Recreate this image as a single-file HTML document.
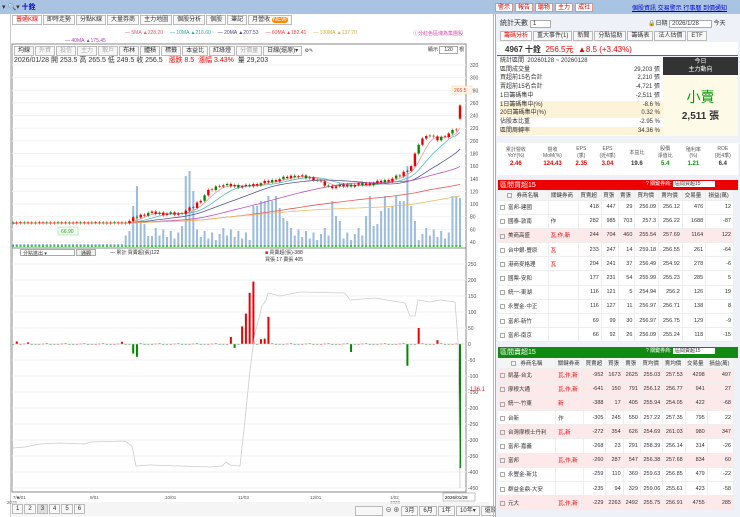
<!DOCTYPE html><html><head><meta charset="utf-8"><style>
*{box-sizing:border-box;margin:0;padding:0}
body{width:740px;height:517px;overflow:hidden;background:#fff;font-family:"Liberation Sans","Noto Sans CJK TC",sans-serif;font-size:7px;color:#333;position:relative}
.a{position:absolute}
.top{left:0;top:0;width:740px;height:14px;background:#a9c4e2}
.btn{display:inline-block;border:1px solid #c99;background:#fff;color:#c00;font-size:6px;padding:0 2px;margin-right:2px;height:9px;line-height:8px}
.tab{display:inline-block;border:1px solid #bbb;background:#f7f7f7;font-size:6px;padding:0 3px;height:10px;line-height:9px;margin-right:1px}
table{border-collapse:collapse}
.t td{font-size:5.5px;height:14.2px;border-right:1px solid #eee;border-bottom:1px solid #eee;text-align:right;padding-right:2px;white-space:nowrap}
.t td.n{text-align:left;padding-left:2px}
.t tr.h td{height:10px;background:#f4f4f4;text-align:center}
.pk{background:#fde9ea}
.cb{display:inline-block;width:5px;height:5px;border:1px solid #aaa;margin-right:3px;vertical-align:middle}
.r{color:#e00}.g{color:#090}
</style></head><body>
<div class="a top"></div>
<div class="a" style="left:2px;top:2px;font-size:7px">▾ 🔍▾ <b style="color:#00c">十銓</b></div>
<div class="a" style="left:495px;top:3px"><span class="btn">警示</span><span class="btn">報告</span><span class="btn">聽物</span><span class="btn">主力</span><span class="btn">成社</span></div>
<div class="a" style="left:632px;top:3px;font-size:6px;color:#00c;text-decoration:underline">個股資訊 交易警示 行事曆 到價通知</div>
<div class="a" style="left:10px;top:14px;width:1px;height:503px;background:#ccc"></div>
<div class="a" style="left:12px;top:15px"><span class="tab" style="color:#e00;background:#fff">普通K線</span><span class="tab">即時走勢</span><span class="tab">分點K線</span><span class="tab">大量券商</span><span class="tab">主力地圖</span><span class="tab">個股分析</span><span class="tab">個股</span><span class="tab">筆記</span><span class="tab">月營收 <span style="background:#f80;color:#fff;border-radius:3px;padding:0 1px">NEW</span></span></div>
<div class="a" style="left:125px;top:30px;font-size:5px;white-space:nowrap"><span style="color:#e55">— 5MA ▲228.20</span> &nbsp;&nbsp;&nbsp;&nbsp;<span style="color:#2a9">— 10MA ▲216.60</span> &nbsp;&nbsp;&nbsp;&nbsp;<span style="color:#448">— 20MA ▲207.53</span> &nbsp;&nbsp;&nbsp;&nbsp;<span style="color:#e44">— 60MA ▲182.41</span> &nbsp;&nbsp;&nbsp;&nbsp;<span style="color:#da3">— 100MA ▲137.70</span></div>
<div class="a" style="left:65px;top:38px;font-size:5px;color:#a4a">— 40MA ▲175.45</div>
<div class="a" style="left:413px;top:30px;font-size:5px;color:#d4a">ⓘ分紅色區塊為集團股</div>
<svg class="a" id="ch" style="left:0;top:0" width="495" height="517"></svg>
<div class="a" style="left:14px;top:46px;font-size:5px"><span class="tab">均線</span><span class="tab" style="color:#aaa">外資</span><span class="tab" style="color:#aaa">投信</span><span class="tab" style="color:#aaa">主力</span><span class="tab" style="color:#aaa">散戶</span><span class="tab">布林</span><span class="tab">體積</span><span class="tab">標籤</span><span class="tab">本益比</span><span class="tab">紅綠燈</span><span class="tab" style="color:#aaa">分價量</span><span class="tab">日線(還原)▾</span> ⚙✎</div>
<div class="a" style="left:14px;top:55px;font-size:7px">2026/01/28 開 253.5 高 265.5 低 249.5 收 256.5 &nbsp; <span class="r">漲跌 8.5 &nbsp;漲幅 3.43%</span> &nbsp;量 29,203</div>
<div class="a" style="left:428px;top:46px;font-size:5px">顯示 <span style="border:1px solid #aaa;padding:0 4px">120</span> 根</div>
<div class="a" style="left:20px;top:249px;font-size:5px;border:1px solid #aaa;width:55px;height:7px;padding-left:2px">分點進出 ▾</div>
<div class="a" style="left:76px;top:249px;font-size:5px;border:1px solid #aaa;background:#eee;width:20px;height:7px;text-align:center">通觀</div>
<div class="a" style="left:110px;top:249px;font-size:5px">— 累計 買賣超(張)122</div>
<div class="a" style="left:265px;top:249px;font-size:5px"><span class="r">■</span> 買賣超(張)-388<br>買張 17 賣張 405</div>
<div class="a" style="left:12px;top:504px;font-size:6px"><span class="tab">1</span><span class="tab">2</span><span class="tab" style="background:#ddd">3</span><span class="tab">4</span><span class="tab">5</span><span class="tab">6</span></div>
<div class="a" style="left:355px;top:505px;font-size:6px;white-space:nowrap"><span class="tab" style="width:28px">&nbsp;</span> ⊖ ⊕ <span class="tab">3月</span><span class="tab">6月</span><span class="tab">1年</span><span class="tab">10年▾</span><span class="tab">還原</span></div>
<div class="a" style="left:493px;top:14px;width:1px;height:503px;background:#bbb"></div>
<div class="a" style="left:495px;top:14px;width:245px;height:503px;background:#eef2f8;border-left:1px solid #aac"></div>
<div class="a" style="left:500px;top:18px;font-size:7px">統計天數 <span style="background:#fff;border:1px solid #aaa;padding:0 14px 0 2px;font-size:6px">1</span></div>
<div class="a" style="left:648px;top:18px;font-size:6px">🔒日期 <span style="background:#fff;border:1px solid #aaa;padding:0 12px 0 2px">2026/1/28</span> 今天</div>
<div class="a" style="left:500px;top:31px;font-size:5px"><span class="tab" style="color:#e00;background:#fff">籌碼分析</span><span class="tab">重大事件(1)</span><span class="tab">新聞</span><span class="tab">分點協助</span><span class="tab">籌碼表</span><span class="tab">法人估價</span><span class="tab">ETF</span></div>
<div class="a" style="left:497px;top:42px;width:241px;height:14px;background:#fff;border-bottom:1px solid #d33;font-size:8px;padding:2px 0 0 8px"><b>4967 十銓</b> &nbsp;<span class="r">256.5元 &nbsp;▲8.5 (+3.43%)</span></div>
<div class="a" style="left:497px;top:57px;width:166px;height:79px;background:#fff;font-size:6px;line-height:8.7px;padding-left:3px">
<div>統計區間 &nbsp;20260128 ~ 20260128</div>
<div>區間成交量<span style="float:right;padding-right:3px">29,203 張</span></div>
<div>買超前15名合計<span style="float:right;padding-right:3px">2,210 張</span></div>
<div>賣超前15名合計<span style="float:right;padding-right:3px">-4,721 張</span></div>
<div>1日籌碼集中 <span style="float:right;padding-right:3px">-2,511 張</span></div>
<div style="background:#fdf3d8">1日籌碼集中(%)<span style="float:right;padding-right:3px">-8.6 %</span></div>
<div style="background:#fdf3d8">20日籌碼集中(%)<span style="float:right;padding-right:3px">0.32 %</span></div>
<div>佔股本比重<span style="float:right;padding-right:3px">-2.95 %</span></div>
<div style="background:#fdf3d8">區間周轉率<span style="float:right;padding-right:3px">34.36 %</span></div></div>
<div class="a" style="left:663px;top:57px;width:75px;height:18px;background:#333;color:#fff;font-size:6px;text-align:center;line-height:8px;padding-top:1px">今日<br>主力動向</div>
<div class="a" style="left:663px;top:75px;width:75px;height:61px;background:#fdfbe8;text-align:center"><div style="color:#090;font-size:14px;margin-top:12px">小賣</div><div style="font-size:10px;font-weight:bold">2,511 張</div></div>
<div class="a" style="left:497px;top:143px;width:241px;height:32px;background:#fff">
<table style="width:100%;font-size:5px;text-align:center"><tr style="height:18px;color:#555"><td>累計營收<br>YoY(%)</td><td>營收<br>MoM(%)</td><td>EPS<br>(季)</td><td>EPS<br>(近4季)</td><td>本益比</td><td>股價<br>淨值比</td><td>殖利率<br>(%)</td><td>ROE<br>(近4季)</td></tr>
<tr style="font-size:6px;font-weight:bold"><td class="r">2.46</td><td class="r">124.43</td><td class="r">2.35</td><td class="r">3.04</td><td>19.6</td><td class="g">5.4</td><td class="g">1.21</td><td>6.4</td></tr></table></div>
<div class="a" style="left:498px;top:180px;width:240px;height:10px;background:#e00;color:#fff;font-size:7px;padding-left:2px">區間買超15<span style="position:absolute;left:148px;font-size:5px">? 關鍵券商: <span style="background:#fff;color:#333;padding:0 14px 0 2px">區間買超15</span></span></div>
<table class="a t" style="left:498px;top:190px;width:236px;background:#fff">
<tr class="h"><td class="n"><span class="cb"></span> 券商名稱</td><td>關鍵券商</td><td>買賣超</td><td>買張</td><td>賣張</td><td>買均價</td><td>賣均價</td><td>交易量</td><td>損益(萬)</td></tr>
<tr><td class="n"><span class="cb"></span>富邦-建國</td><td></td><td>418</td><td>447</td><td>29</td><td>256.09</td><td>256.12</td><td>476</td><td>12</td></tr>
<tr><td class="n"><span class="cb"></span>國泰-敦南</td><td class="n">作</td><td>282</td><td>985</td><td>703</td><td>257.3</td><td>256.22</td><td>1688</td><td>-87</td></tr>
<tr class="pk"><td class="n"><span class="cb"></span>美商高盛</td><td class="n r">瓦,作,新</td><td>244</td><td>704</td><td>460</td><td>255.54</td><td>257.69</td><td>1164</td><td>122</td></tr>
<tr><td class="n"><span class="cb"></span>台中銀-豐原</td><td class="n r">瓦</td><td>233</td><td>247</td><td>14</td><td>259.18</td><td>256.55</td><td>261</td><td>-64</td></tr>
<tr><td class="n"><span class="cb"></span>港商麥格理</td><td class="n r">瓦</td><td>204</td><td>241</td><td>37</td><td>256.49</td><td>254.92</td><td>278</td><td>-6</td></tr>
<tr><td class="n"><span class="cb"></span>國票-安和</td><td></td><td>177</td><td>231</td><td>54</td><td>255.99</td><td>255.23</td><td>285</td><td>5</td></tr>
<tr><td class="n"><span class="cb"></span>統一-東湖</td><td></td><td>116</td><td>121</td><td>5</td><td>254.94</td><td>256.2</td><td>126</td><td>19</td></tr>
<tr><td class="n"><span class="cb"></span>永豐金-中正</td><td></td><td>116</td><td>127</td><td>11</td><td>256.97</td><td>256.71</td><td>138</td><td>8</td></tr>
<tr><td class="n"><span class="cb"></span>富邦-新竹</td><td></td><td>69</td><td>99</td><td>30</td><td>256.97</td><td>256.75</td><td>129</td><td>-9</td></tr>
<tr><td class="n"><span class="cb"></span>富邦-南京</td><td></td><td>66</td><td>92</td><td>26</td><td>256.09</td><td>255.24</td><td>118</td><td>-15</td></tr>
</table>
<div class="a" style="left:498px;top:347px;width:240px;height:11px;background:#118a11;color:#fff;font-size:7px;padding-left:2px">區間賣超15<span style="position:absolute;left:148px;font-size:5px">? 關鍵券商: <span style="background:#fff;color:#333;padding:0 14px 0 2px">區間賣超15</span></span></div>
<table class="a t" style="left:498px;top:358px;width:236px;background:#fff">
<tr class="h"><td class="n"><span class="cb"></span> 券商名稱</td><td>關鍵券商</td><td>買賣超</td><td>買張</td><td>賣張</td><td>買均價</td><td>賣均價</td><td>交易量</td><td>損益(萬)</td></tr>
<tr class="pk"><td class="n"><span class="cb"></span>凱基-台北</td><td class="n r">瓦,作,新</td><td>-952</td><td>1673</td><td>2625</td><td>255.03</td><td>257.53</td><td>4298</td><td>497</td></tr>
<tr class="pk"><td class="n"><span class="cb"></span>摩根大通</td><td class="n r">瓦,作,新</td><td>-641</td><td>150</td><td>791</td><td>256.12</td><td>256.77</td><td>941</td><td>27</td></tr>
<tr class="pk"><td class="n"><span class="cb"></span>統一-竹東</td><td class="n r">新</td><td>-388</td><td>17</td><td>405</td><td>255.94</td><td>254.05</td><td>422</td><td>-68</td></tr>
<tr><td class="n"><span class="cb"></span>台新</td><td class="n">作</td><td>-305</td><td>245</td><td>550</td><td>257.22</td><td>257.35</td><td>795</td><td>22</td></tr>
<tr class="pk"><td class="n"><span class="cb"></span>台灣摩根士丹利</td><td class="n r">瓦,新</td><td>-272</td><td>354</td><td>626</td><td>254.69</td><td>261.03</td><td>980</td><td>347</td></tr>
<tr><td class="n"><span class="cb"></span>富邦-嘉義</td><td></td><td>-268</td><td>23</td><td>291</td><td>258.39</td><td>256.14</td><td>314</td><td>-26</td></tr>
<tr class="pk"><td class="n"><span class="cb"></span>富邦</td><td class="n r">瓦,作,新</td><td>-260</td><td>287</td><td>547</td><td>256.38</td><td>257.68</td><td>834</td><td>60</td></tr>
<tr><td class="n"><span class="cb"></span>永豐金-新北</td><td></td><td>-259</td><td>110</td><td>369</td><td>259.63</td><td>256.85</td><td>479</td><td>-22</td></tr>
<tr><td class="n"><span class="cb"></span>群益金鼎-大安</td><td></td><td>-235</td><td>94</td><td>329</td><td>259.06</td><td>255.61</td><td>423</td><td>-58</td></tr>
<tr class="pk"><td class="n"><span class="cb"></span>元大</td><td class="n r">瓦,作,新</td><td>-229</td><td>2263</td><td>2492</td><td>255.75</td><td>256.91</td><td>4755</td><td>285</td></tr>
</table>
<script>
var s='',N=120,x0=13,dx=(460-x0)/(N-1);
function py(p){return 65+(320-p)*0.632}
var key=[[0,70],[30,70],[33,80],[36,86],[44,84],[48,95],[52,120],[55,130],[62,128],[70,138],[75,145],[80,140],[84,127],[90,130],[95,132],[100,138],[103,145],[106,160],[108,195],[110,210],[113,202],[118,218],[119,250],[120,256]];
var c=[];for(var i=0;i<N;i++){for(var k=0;k<key.length-1;k++)if(i>=key[k][0]&&i<=key[k+1][0]){var t=(i-key[k][0])/(key[k+1][0]-key[k][0]);c.push(key[k][1]+t*(key[k+1][1]-key[k][1])+((i*7)%5-2)*(i>30?1.2:0.2));break;}}
s+='<rect x="12" y="44" width="454" height="204" fill="none" stroke="#888"/><rect x="12" y="248" width="454" height="244" fill="none" stroke="#888"/>';
for(var p=40;p<=320;p+=20){var y=py(p);s+='<line x1="12" x2="466" y1="'+y+'" y2="'+y+'" stroke="#f2f2f2"/><text x="470" y="'+(y+2)+'" font-size="5" fill="#555">'+p+'</text>';}
for(var v=250;v>=-450;v-=50){var y=344-v*0.32;s+='<line x1="12" x2="466" y1="'+y+'" y2="'+y+'" stroke="#f2f2f2"/><text x="468" y="'+(y+2)+'" font-size="5" fill="#555">'+v+'</text>';}
s+='<text x="468" y="391" font-size="6" fill="#c33">-136.1</text>';
var big={31:15,32:40,33:60,34:25,35:22,36:10,37:10,45:20,46:70,47:75,48:55,64:40,65:40,66:45,67:45,68:50,69:45,70:50,71:38,72:28,73:25,85:45,86:30,87:25,94:30,95:50,96:20,97:22,98:35,99:50,100:38,101:40,102:50,103:45,104:45,105:80,106:40,107:25,117:50,118:50,119:48};
for(var i=0;i<N;i++){var x=x0+i*dx,h=big[i]!==undefined?big[i]:(i<30?2+(i*3)%3:6+((i*13)%9)*1.5);s+='<rect x="'+(x-1)+'" y="'+(246-h)+'" width="2" height="'+h+'" fill="#9bbbe0"/>';s+='<rect x="'+(x-1)+'" y="245" width="2" height="2" fill="#3c3"/>';}
function ma(n,col){var d='';for(var i=0;i<N;i++){var a=0,m=0;for(var j=Math.max(0,i-n+1);j<=i;j++){a+=c[j];m++}var v=a/m;if(n>40)v=70+(v-70)*0.75;d+=(i?'L':'M')+(x0+i*dx).toFixed(1)+' '+py(v).toFixed(1)}s+='<path d="'+d+'" fill="none" stroke="'+col+'" stroke-width="0.8"/>';}
ma(5,'#e99');ma(10,'#5bb');ma(20,'#559');ma(40,'#b5b');ma(60,'#e55');ma(100,'#eb6');
for(var i=0;i<N;i++){var x=x0+i*dx,o=i?c[i-1]:c[i],cl=c[i];var up=((i*5)%3)!=0;if(i==119){o=235;cl=256}var a=Math.min(o,cl),b=Math.max(o,cl);if(b-a<1)b=a+1;var col=up?'#e00':'#080';var y1=py(b),y2=py(a);s+='<line x1="'+x+'" x2="'+x+'" y1="'+(y1-1.5)+'" y2="'+(y2+1.5)+'" stroke="'+col+'" stroke-width="0.5"/><rect x="'+(x-1.2)+'" y="'+y1+'" width="2.4" height="'+(y2-y1)+'" fill="'+col+'"/>';}
s+='<rect x="452" y="86" width="20" height="8" fill="#fff8e8" stroke="#fc9" stroke-width=".5"/><text x="454" y="92" font-size="5" fill="#e33">265.5</text>';
s+='<rect x="58" y="227" width="20" height="8" fill="#efe" stroke="#9c9" stroke-width=".5"/><text x="61" y="233" font-size="5" fill="#393">66.90</text>';
var lb={1:8,4:5,29:7,32:-30,33:-40,58:22,59:-12,61:55,62:95,63:160,64:195,66:15,67:17,68:85,90:-25,105:-68,108:50,113:12,119:-388};
for(var i=0;i<N;i++){var v=lb[i];if(v===undefined)v=((i*11)%5-2);var x=x0+i*dx,h=v*0.32;s+='<rect x="'+(x-1)+'" y="'+(h>0?344-h:344)+'" width="2" height="'+Math.max(Math.abs(h),0.6)+'" fill="'+(v>=0?'#e00':'#080')+'"/>';}
s+='<line x1="12" x2="466" y1="344" y2="344" stroke="#ccc" stroke-width=".5"/>';
s+='<path d="M13 448 L25 447 L30 446 L40 444 L60 443 L85 444 L90 442 L125 441 L132 446 L136 466 L150 465 L180 466 L210 467 L222 466 L226 462 L230 465 L240 466 L245 420 L250 370 L255 333 L262 306 L266 300 L268 293 L280 296 L300 292 L345 293 L350 300 L375 298 L405 303 L410 316 L415 316 L418 300 L430 302 L440 300 L455 302 L458 340 L460 488" fill="none" stroke="#ccc" stroke-width="0.8"/>';
var dt=[[13,'7/■/01'],[90,'9/01'],[165,'10/01'],[238,'11/03'],[310,'12/01'],[390,'1/02']];dt.forEach(function(d){s+='<text x="'+d[0]+'" y="499" font-size="4.5" fill="#555">'+d[1]+'</text>'});
s+='<text x="7" y="504" font-size="4.5" fill="#555">2025</text><text x="390" y="504" font-size="4.5" fill="#555">2026</text><rect x="443" y="493" width="32" height="8" fill="#fff" stroke="#888" stroke-width=".5"/><text x="445" y="499" font-size="4.5">2026/01/28</text>';
s+='<rect x="11" y="502" width="478" height="14" fill="#eee" opacity=".6"/>';
document.getElementById('ch').innerHTML=s;
</script>
</body></html>
